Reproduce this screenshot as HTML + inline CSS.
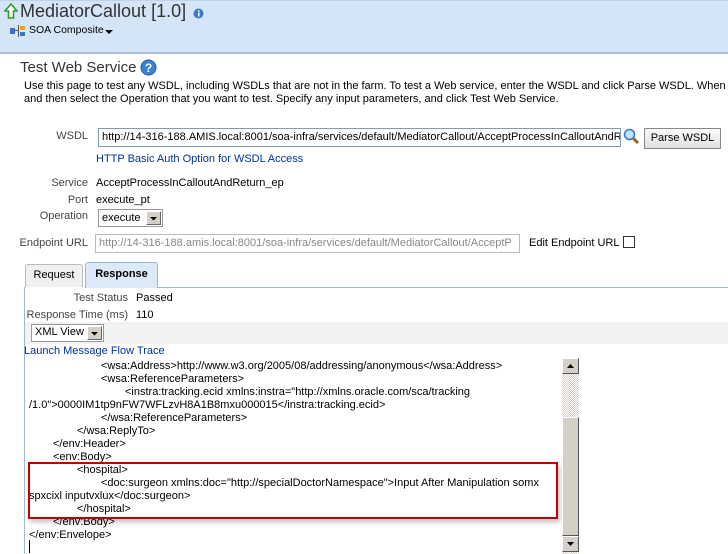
<!DOCTYPE html>
<html><head><style>
*{margin:0;padding:0;box-sizing:border-box}
body{width:728px;height:554px;overflow:hidden;background:#fff;font-family:"Liberation Sans","DejaVu Sans",sans-serif;font-size:11px;color:#000;position:relative}
.a{position:absolute;white-space:nowrap}
.hdr{position:absolute;left:0;top:0;width:728px;height:54px;background:#d4e5f8;border-top:1px solid #c0d2e8;border-bottom:2px solid #a8c0dc}
.lbl{color:#444;text-align:right}
.inp{position:absolute;border:1px solid #7f9db9;background:#fff;padding:2px 3px;font-size:11px;white-space:nowrap;overflow:hidden;height:19px}
.link{color:#003399}
.xml{font-size:11px;line-height:13px}
</style></head><body>
<div class="hdr"></div>
<svg class="a" style="left:4px;top:3px" width="14" height="16" viewBox="0 0 14 16"><path d="M7 1 L13 8 H9.5 V15 H4.5 V8 H1 Z" fill="#fff" stroke="#2e9a2e" stroke-width="1.6"/></svg>
<div class="a" style="left:20px;top:1px;font-size:18px;color:#333">MediatorCallout [1.0]</div>
<svg class="a" style="left:193px;top:8px" width="11" height="11"><circle cx="5.5" cy="5.5" r="5" fill="#3a78c8"/><rect x="5" y="4.5" width="1.5" height="4" fill="#fff"/><rect x="5" y="2.3" width="1.5" height="1.4" fill="#fff"/></svg>
<svg class="a" style="left:10px;top:25px" width="16" height="12"><rect x="0" y="3" width="5" height="6" fill="#3b74c4"/><rect x="5" y="5" width="3" height="1" fill="#555"/><rect x="8" y="0" width="1" height="12" fill="#555"/><rect x="10" y="1" width="5" height="4" fill="#f0a020"/><rect x="10" y="7" width="5" height="4" fill="#3b74c4"/></svg>
<div class="a" style="left:29px;top:24px;font-size:10.5px">SOA Composite</div>
<svg class="a" style="left:105px;top:30px" width="8" height="5"><path d="M0 0H8L4 4Z" fill="#000"/></svg>
<div class="a" style="left:20px;top:59px;font-size:15px;color:#333">Test Web Service</div>
<svg class="a" style="left:140px;top:59px" width="17" height="17"><circle cx="8.5" cy="8.5" r="7.5" fill="#3a82d4" stroke="#1a5aa8"/><text x="8.5" y="13" font-size="12" font-weight="bold" fill="#fff" text-anchor="middle" font-family="Liberation Sans">?</text></svg>
<div class="a" style="left:24px;top:80px">Use this page to test any WSDL, including WSDLs that are not in the farm. To test a Web service, enter the WSDL and click Parse WSDL. When the</div>
<div class="a" style="left:24px;top:93px">and then select the Operation that you want to test. Specify any input parameters, and click Test Web Service.</div>

<div class="a lbl" style="left:0;width:88px;top:130px">WSDL</div>
<div class="inp" style="left:98px;top:128px;width:523px">http://14-316-188.AMIS.local:8001/soa-infra/services/default/MediatorCallout/AcceptProcessInCalloutAndReturn_ep?WSDL</div>
<svg class="a" style="left:623px;top:128px" width="17" height="17"><circle cx="6.5" cy="6.5" r="5" fill="#bfe0ff" stroke="#3a78c8" stroke-width="1.5"/><path d="M10 10 L15 15" stroke="#a06020" stroke-width="3"/></svg>
<div class="a" style="left:644px;top:128px;width:77px;height:21px;border:1px solid #888;background:linear-gradient(#fafafa,#e0e0e0);text-align:center;line-height:19px">Parse WSDL</div>
<div class="a link" style="left:96px;top:153px">HTTP Basic Auth Option for WSDL Access</div>
<div class="a lbl" style="left:0;width:88px;top:177px">Service</div>
<div class="a" style="left:96px;top:177px">AcceptProcessInCalloutAndReturn_ep</div>
<div class="a lbl" style="left:0;width:88px;top:194px">Port</div>
<div class="a" style="left:96px;top:194px">execute_pt</div>
<div class="a lbl" style="left:0;width:88px;top:210px">Operation</div>
<div class="a" style="left:98px;top:209px;width:65px;height:18px;border:1px solid #999;background:#fff;padding:2px 3px">execute</div>
<div class="a" style="left:146px;top:211px;width:15px;height:14px;background:#d4d0c8;border:1px solid;border-color:#fff #666 #666 #fff"><svg width="13" height="12"><path d="M3 5H10L6.5 8.5Z" fill="#000"/></svg></div>
<div class="a lbl" style="left:0;width:88px;top:237px">Endpoint URL</div>
<div class="inp" style="left:95px;top:234px;width:425px;color:#888;border-color:#bbb">http://14-316-188.amis.local:8001/soa-infra/services/default/MediatorCallout/AcceptP</div>
<div class="a" style="left:529px;top:237px">Edit Endpoint URL</div>
<div class="a" style="left:623px;top:236px;width:12px;height:12px;border:1px solid #333;background:#fff"></div>

<div class="a" style="left:25px;top:264px;width:58px;height:23px;border:1px solid #bbb;border-bottom:none;background:#f0f0f0;border-radius:3px 3px 0 0;text-align:center;line-height:20px;font-size:11px">Request</div>
<div class="a" style="left:85px;top:262px;width:73px;height:26px;border:1px solid #9ab8dc;border-bottom:none;background:#dce9f6;border-radius:3px 3px 0 0;text-align:center;line-height:22px;font-weight:bold;font-size:11px">Response</div>
<div class="a" style="left:24px;top:287px;width:1px;height:267px;background:#9ab8dc"></div>
<div class="a" style="left:158px;top:287px;width:570px;height:1px;background:#9ab8dc"></div>
<div class="a lbl" style="left:25px;width:103px;top:292px">Test Status</div>
<div class="a" style="left:136px;top:292px">Passed</div>
<div class="a lbl" style="left:25px;width:103px;top:309px">Response Time (ms)</div>
<div class="a" style="left:136px;top:309px">110</div>
<div class="a" style="left:25px;top:322px;width:703px;height:22px;background:#f2f2f2"></div>
<div class="a" style="left:31px;top:324px;width:73px;height:18px;border:1px solid #999;background:#fff;padding:1px 3px">XML View</div>
<div class="a" style="left:87px;top:326px;width:15px;height:14px;background:#d4d0c8;border:1px solid;border-color:#fff #666 #666 #fff"><svg width="13" height="12"><path d="M3 5H10L6.5 8.5Z" fill="#000"/></svg></div>
<div class="a link" style="left:24px;top:345px">Launch Message Flow Trace</div>

<div class="a xml" style="left:29px;top:360px">
<div style="padding-left:72px">&lt;wsa:Address&gt;http://www.w3.org/2005/08/addressing/anonymous&lt;/wsa:Address&gt;</div>
<div style="padding-left:72px">&lt;wsa:ReferenceParameters&gt;</div>
<div style="padding-left:96px">&lt;instra:tracking.ecid xmlns:instra="http://xmlns.oracle.com/sca/tracking</div>
<div>/1.0"&gt;0000IM1tp9nFW7WFLzvH8A1B8mxu000015&lt;/instra:tracking.ecid&gt;</div>
<div style="padding-left:72px">&lt;/wsa:ReferenceParameters&gt;</div>
<div style="padding-left:48px">&lt;/wsa:ReplyTo&gt;</div>
<div style="padding-left:24px">&lt;/env:Header&gt;</div>
<div style="padding-left:24px">&lt;env:Body&gt;</div>
<div style="padding-left:48px">&lt;hospital&gt;</div>
<div style="padding-left:72px">&lt;doc:surgeon xmlns:doc="http://specialDoctorNamespace"&gt;Input After Manipulation somx</div>
<div>spxcixl inputvxlux&lt;/doc:surgeon&gt;</div>
<div style="padding-left:48px">&lt;/hospital&gt;</div>
<div style="padding-left:24px">&lt;/env:Body&gt;</div>
<div>&lt;/env:Envelope&gt;</div>
</div>
<div class="a" style="left:29px;top:540px;width:1px;height:13px;background:#000"></div>
<div class="a" style="left:28px;top:462px;width:530px;height:57px;border:2px solid #c00000;box-shadow:2px 3px 5px rgba(0,0,0,0.25)"></div>

<div class="a" style="left:562px;top:358px;width:17px;height:196px;background:repeating-conic-gradient(#d4d0c8 0 25%,#fff 0 50%) 0 0/2px 2px"></div>
<div class="a" style="left:562px;top:358px;width:17px;height:16px;background:#d4d0c8;border:1px solid;border-color:#fff #555 #555 #fff"><svg width="15" height="14"><path d="M4 9H11L7.5 5Z" fill="#000"/></svg></div>
<div class="a" style="left:562px;top:417px;width:17px;height:119px;background:#d4d0c8;border:1px solid;border-color:#fff #555 #555 #fff"></div>
<div class="a" style="left:562px;top:536px;width:17px;height:16px;background:#d4d0c8;border:1px solid;border-color:#fff #555 #555 #fff"><svg width="15" height="14"><path d="M4 5H11L7.5 9Z" fill="#000"/></svg></div>
</body></html>
